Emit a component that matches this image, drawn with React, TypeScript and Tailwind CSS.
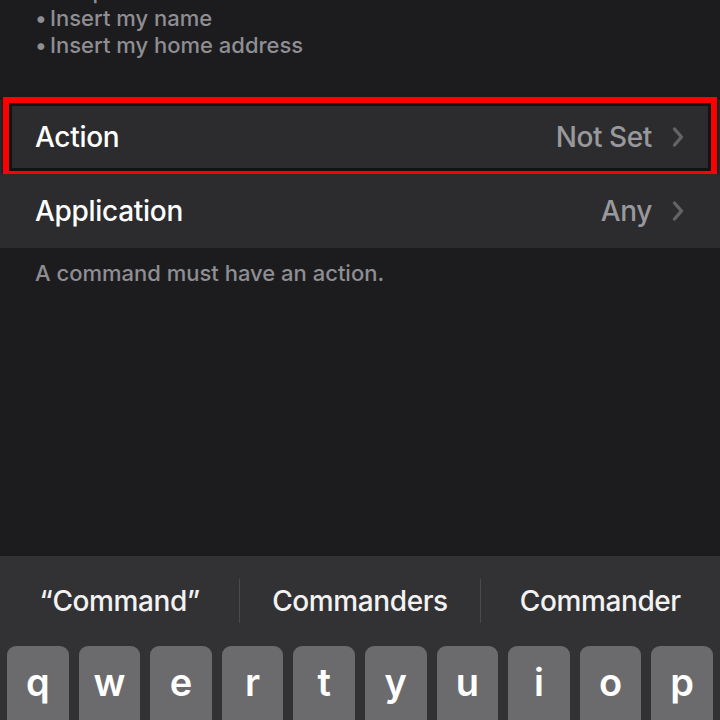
import React from "react";

const Chevron = () => (
  <svg width="14" height="22" viewBox="0 0 14 22" className="ml-[19px]" fill="none">
    <path d="M3.5 3 L10.5 11 L3.5 19" stroke="#636368" strokeWidth="3.4" strokeLinecap="round" strokeLinejoin="round" />
  </svg>
);

const Row = ({ label, value, children }: { label: string; value: string; children?: React.ReactNode }) => (
  <div className="relative flex h-[74px] items-center bg-[#2c2c2e] pl-[35px] pr-[35px]">
    <span className="text-[28px] font-medium text-white tracking-[-0.3px]">{label}</span>
    <div className="ml-auto flex items-center">
      <span className="text-[28px] font-medium text-[#98989d] tracking-[-0.4px]">{value}</span>
      <Chevron />
    </div>
    {children}
  </div>
);

const keys = ["q", "w", "e", "r", "t", "y", "u", "i", "o", "p"];
const suggestions = ["\u201cCommand\u201d", "Commanders", "Commander"];

export default function App() {
  return (
    <div
      className="flex h-[720px] w-[720px] flex-col overflow-hidden bg-[#1c1c1e]"
      style={{ fontFamily: "Inter, 'Noto Sans', sans-serif" }}
    >
      <div className="mt-[-22px] mb-[41px] pl-[35px] text-[22px] font-medium leading-[27px] text-[#8e8e93]">
        <div>Examples:</div>
        <div className="flex">
          <span className="w-[15px]">•</span>
          <span>Insert my name</span>
        </div>
        <div className="flex">
          <span className="w-[15px]">•</span>
          <span>Insert my home address</span>
        </div>
      </div>

      <Row label="Action" value="Not Set">
        <div className="pointer-events-none absolute left-[3px] right-[3px] top-[-3px] bottom-[-3px] border-[6px] border-[#ff0000] shadow-[inset_0_0_0_3px_rgba(0,0,0,0.55),0_3px_4px_rgba(0,0,0,0.7)]" />
      </Row>
      <Row label="Application" value="Any" />

      <div className="pl-[35px] pt-[12px] text-[22px] font-medium leading-[26px] text-[#8e8e93]">
        A command must have an action.
      </div>

      <div className="mt-auto flex h-[164px] shrink-0 flex-col overflow-hidden bg-[#323234]">
        <div className="flex h-[90px] shrink-0 items-center">
          {suggestions.map((s, i) => (
            <div
              key={s}
              className={
                "flex h-[44px] flex-1 items-center justify-center text-[28px] font-medium text-[#f2f2f2] tracking-[-0.4px]" +
                (i > 0 ? " border-l border-[#4a4a4c]" : "")
              }
            >
              {s}
            </div>
          ))}
        </div>
        <div className="grid shrink-0 grid-cols-10 gap-[10px] px-[7px]">
          {keys.map((k) => (
            <div
              key={k}
              className="flex h-[84px] items-start justify-center rounded-[9px] bg-[#6b6b6d] pt-[12px] text-[38px] font-semibold leading-[48px] text-white"
            >
              {k}
            </div>
          ))}
        </div>
      </div>
    </div>
  );
}
